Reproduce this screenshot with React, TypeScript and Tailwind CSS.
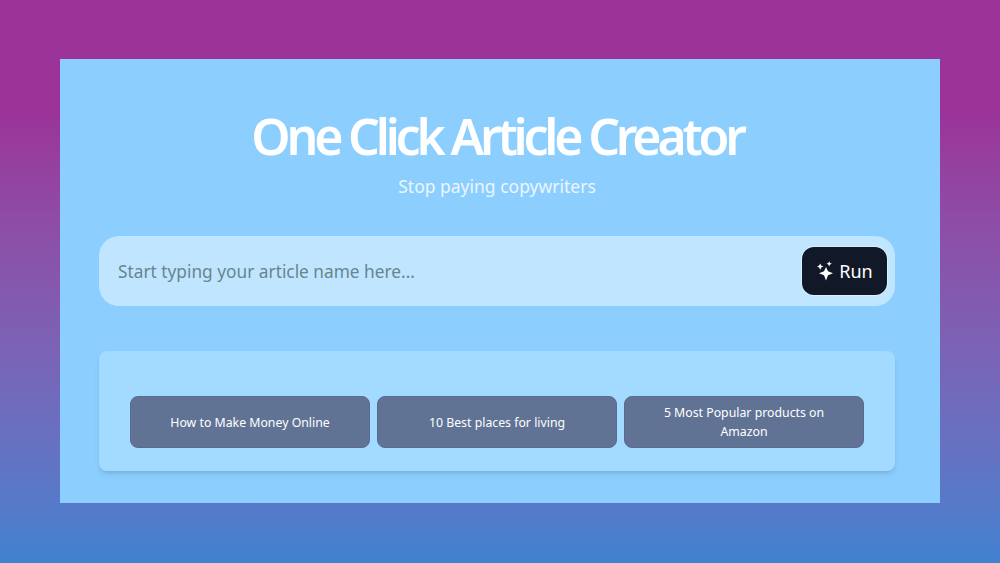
const topics = ["How to Make Money Online", "10 Best places for living", "5 Most Popular products on Amazon"];

function SparkIcon() {
  return (
    <svg width="17" height="20" viewBox="0 0 17 20" fill="white">
      <path d="M9 6 L11 10.2 L16 12.2 L11 14.2 L9 19.5 L7 14.2 L2 12.2 L7 10.2 Z" />
      <path d="M3.2 2.5 L4.2 4.6 L6.4 5.6 L4.2 6.6 L3.2 9 L2.2 6.6 L0 5.6 L2.2 4.6 Z" />
      <path d="M12.2 0.2 L13 2 L15 2.8 L13 3.6 L12.2 5.4 L11.4 3.6 L9.4 2.8 L11.4 2 Z" />
    </svg>
  );
}

export default function App() {
  return (
    <div className="h-[563px] w-[1000px] overflow-hidden bg-gradient-to-b from-[#9b3399] from-20% to-[#3f82d0] px-[60px] pt-[59px] font-['Noto_Sans',sans-serif]">
      <div className="flex h-[444px] w-[880px] flex-col bg-[#8ccfff] pl-[39px] pt-[46px]">
        <div className="flex w-[796px] flex-col items-center">
          <h1 className="text-[50px] leading-[62px] font-semibold tracking-[-4.2px] whitespace-nowrap text-white">One Click Article Creator</h1>
          <p className="mt-[5px] text-[17.5px] leading-[28px] text-[#eaf6ff]">Stop paying copywriters</p>
        </div>
        <div className="mt-[36px] flex h-[70px] w-[796px] shrink-0 items-center justify-between rounded-[20px] bg-[#c0e5ff] pr-[8px] pl-[19px]">
          <span className="pt-[1px] text-[17.3px] text-[#66858f]">Start typing your article name here...</span>
          <button className="flex h-[48px] w-[85px] items-center justify-center gap-[5px] rounded-[12px] bg-[#111827] pl-[1px] text-[18px] text-white ring-1 ring-[#d8f0ff]">
            <SparkIcon />
            Run
          </button>
        </div>
        <div className="mt-[45px] grid h-[120px] w-[796px] shrink-0 grid-cols-3 gap-[7px] rounded-[8px] bg-[#a3daff] px-[31px] pt-[45px] shadow-md">
          {topics.map((t) => (
            <button key={t} className="flex h-[52px] items-center justify-center rounded-[8px] border border-[#5a6a90] bg-[#617395] px-[24px] text-center text-[12.3px] leading-[19px] text-white">
              {t}
            </button>
          ))}
        </div>
      </div>
    </div>
  );
}
